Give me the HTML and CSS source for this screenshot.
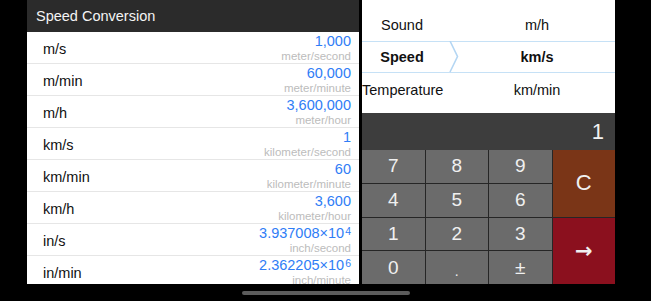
FILE: index.html
```html
<!DOCTYPE html>
<html lang="en">
<head>
  <meta charset="UTF-8">
  <meta name="viewport" content="width=device-width, initial-scale=1.0">
  <title>Speed Conversion</title>
  <link rel="stylesheet" href="styles.css">
</head>
<body>
  <div class="screen">
    <div class="app">
      <!-- results list -->
      <div class="results">
        <div class="results-header">Speed Conversion</div>
        <div class="row">
          <span class="unit">m/s</span>
          <div class="amount"><span class="value">1,000</span><span class="name">meter/second</span></div>
        </div>
        <div class="row">
          <span class="unit">m/min</span>
          <div class="amount"><span class="value">60,000</span><span class="name">meter/minute</span></div>
        </div>
        <div class="row">
          <span class="unit">m/h</span>
          <div class="amount"><span class="value">3,600,000</span><span class="name">meter/hour</span></div>
        </div>
        <div class="row">
          <span class="unit">km/s</span>
          <div class="amount"><span class="value">1</span><span class="name">kilometer/second</span></div>
        </div>
        <div class="row">
          <span class="unit">km/min</span>
          <div class="amount"><span class="value">60</span><span class="name">kilometer/minute</span></div>
        </div>
        <div class="row">
          <span class="unit">km/h</span>
          <div class="amount"><span class="value">3,600</span><span class="name">kilometer/hour</span></div>
        </div>
        <div class="row">
          <span class="unit">in/s</span>
          <div class="amount"><span class="value">3.937008×10<sup>4</sup></span><span class="name">inch/second</span></div>
        </div>
        <div class="row">
          <span class="unit">in/min</span>
          <div class="amount"><span class="value">2.362205×10<sup>6</sup></span><span class="name">inch/minute</span></div>
        </div>
      </div>

      <!-- picker + keypad -->
      <div class="calc">
        <div class="picker">
          <div class="pick-row">
            <span class="pick-kind">Sound</span>
            <span class="pick-unit">m/h</span>
          </div>
          <div class="pick-row selected">
            <span class="pick-kind">Speed</span>
            <span class="pick-unit">km/s</span>
            <svg class="chevron" width="10" height="32" viewBox="0 0 10 32">
              <polyline points="1,0 8.5,15.5 1,31" fill="none" stroke="#b4d6f3" stroke-width="1.6"/>
            </svg>
          </div>
          <div class="pick-row">
            <span class="pick-kind">Temperature</span>
            <span class="pick-unit">km/min</span>
          </div>
        </div>
        <div class="display">1</div>
        <div class="keypad">
          <button class="key">7</button>
          <button class="key">8</button>
          <button class="key">9</button>
          <button class="key clear">C</button>
          <button class="key">4</button>
          <button class="key">5</button>
          <button class="key">6</button>
          <button class="key">1</button>
          <button class="key">2</button>
          <button class="key">3</button>
          <button class="key enter">→</button>
          <button class="key">0</button>
          <button class="key dot">.</button>
          <button class="key">±</button>
        </div>
      </div>
    </div>
    <div class="home-indicator"></div>
  </div>
</body>
</html>
```

FILE: styles.css
```css
body {
  margin: 0;
  background-color: #000;
  font-family: "Liberation Sans", Arial, sans-serif;
  overflow: hidden;
}

.screen {
  width: 651px;
  height: 301px;
  display: flex;
  flex-direction: column;
}

.app {
  display: flex;
  gap: 3px;
  height: 284px;
  padding-left: 27px;
}

/* left list */
.results {
  width: 332px;
  background-color: #fff;
  overflow: hidden;
}

.results-header {
  height: 32px;
  line-height: 32px;
  padding-left: 9px;
  background-color: #2b2b2b;
  color: #f4f4f4;
  font-size: 14.5px;
}

.row {
  height: 31px;
  border-bottom: 1px solid #e6e6e6;
  display: flex;
  justify-content: space-between;
  align-items: center;
  padding: 0 8px 0 16px;
}

.unit {
  font-size: 14.5px;
  color: #111;
  padding-top: 3px;
}

.amount {
  display: flex;
  flex-direction: column;
  align-items: flex-end;
  padding-top: 1px;
}

.value {
  font-size: 14.5px;
  line-height: 16px;
  color: #2f7df6;
}

.value sup {
  font-size: 10.5px;
  vertical-align: 3px;
  line-height: 0;
  margin-left: 1px;
}

.name {
  font-size: 11.5px;
  line-height: 14px;
  color: #bcbcbc;
}

/* right side */
.calc {
  width: 253px;
  display: flex;
  flex-direction: column;
}

.picker {
  height: 105px;
  padding-top: 8px;
  background-color: #fff;
}

.pick-row {
  height: 33px;
  display: flex;
  align-items: center;
  font-size: 14.5px;
  color: #111;
  position: relative;
}

.pick-row.selected {
  height: 30px;
  border-top: 1px solid #c6e1f6;
  border-bottom: 1px solid #c6e1f6;
  font-weight: bold;
}

.pick-kind {
  width: 80px;
  text-align: center;
  white-space: nowrap;
}

.pick-unit {
  flex: 1;
  padding-left: 17px;
  text-align: center;
}

.chevron {
  position: absolute;
  left: 87px;
  top: -1px;
}

.display {
  height: 37px;
  line-height: 37px;
  background-color: #3d3d3d;
  color: #f2f2f2;
  font-size: 22px;
  text-align: right;
  padding-right: 11px;
}

.keypad {
  flex: 1;
  display: grid;
  grid-template-columns: repeat(4, 1fr);
  grid-template-rows: repeat(4, 1fr);
  gap: 1px;
  background-color: #262626;
}

.key {
  border: none;
  padding: 0;
  background-color: #6b6b6b;
  color: #f0f0f0;
  font-family: inherit;
  font-size: 19px;
}

.key.clear {
  grid-column: 4;
  grid-row: 1 / 3;
  background-color: #7a3517;
  font-size: 22px;
}

.key.enter {
  grid-column: 4;
  grid-row: 3 / 5;
  background-color: #8b101e;
  font-family: "DejaVu Sans", sans-serif;
  font-size: 21px;
  font-weight: bold;
}

.key.dot {
  font-size: 14px;
  padding-top: 6px;
}

.home-indicator {
  width: 168px;
  height: 4px;
  margin: 7px auto 0;
  border-radius: 2px;
  background-color: #5c5c5c;
}
```
